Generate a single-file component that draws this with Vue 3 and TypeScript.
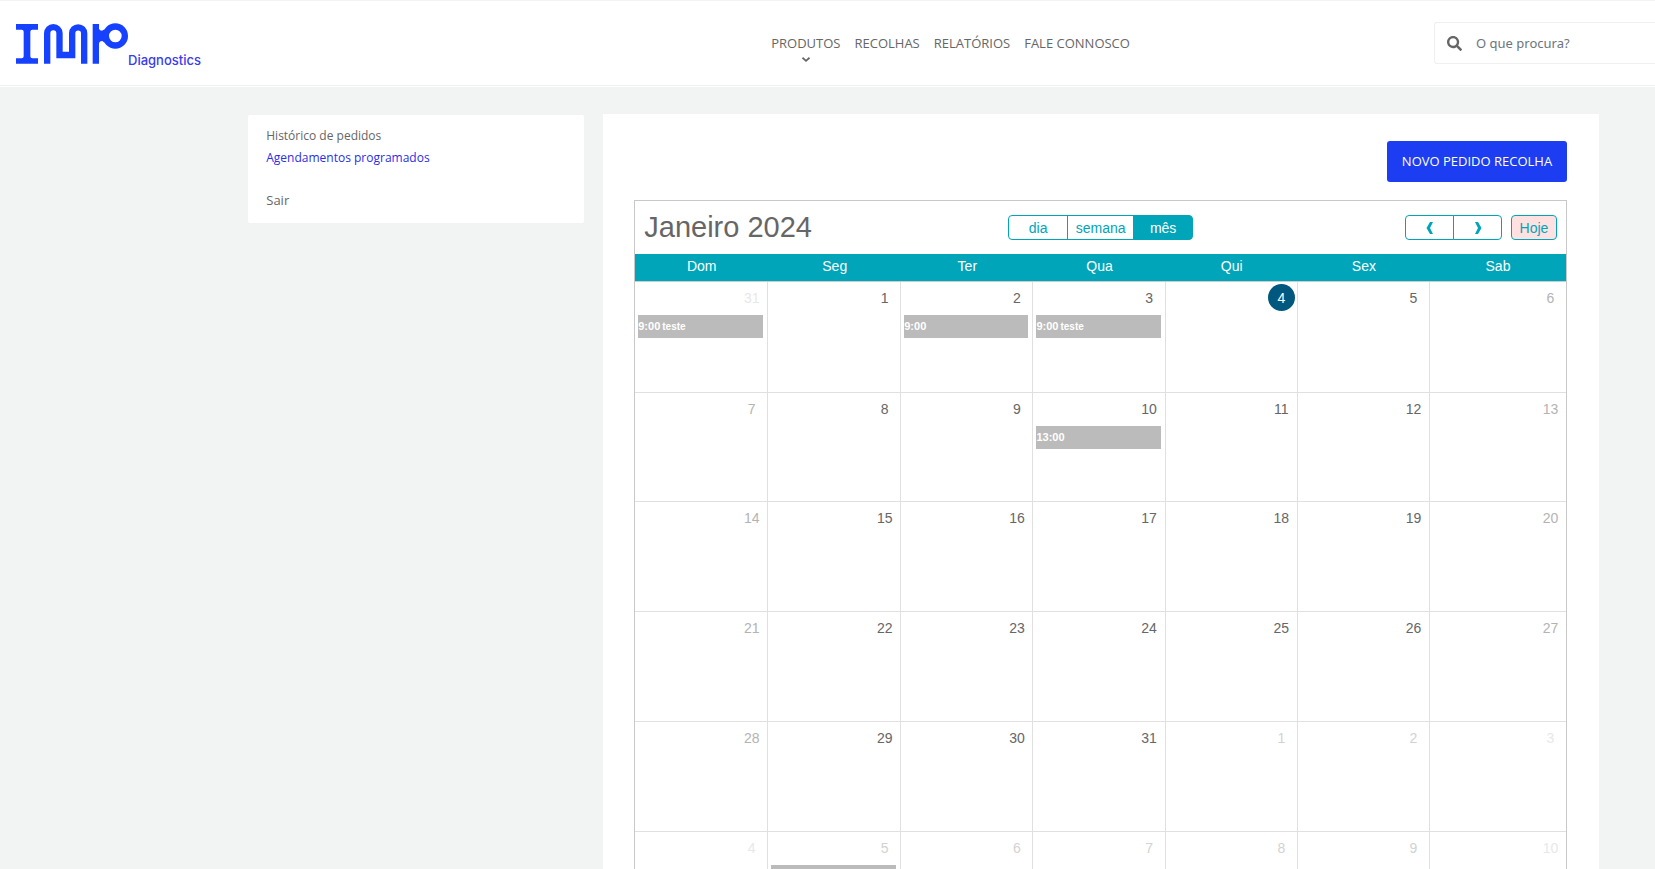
<script setup lang="ts">
interface CalendarEvent {
  time?: string
  title?: string
}

interface CalendarDay {
  key: string
  label: number
  tone: 'normal' | 'weekend' | 'outside' | 'outside-weekend'
  today: boolean
  events: CalendarEvent[]
}

const menu = [
  { label: 'PRODUTOS', expandable: true },
  { label: 'RECOLHAS', expandable: false },
  { label: 'RELATÓRIOS', expandable: false },
  { label: 'FALE CONNOSCO', expandable: false },
]

const weekdays = ['Dom', 'Seg', 'Ter', 'Qua', 'Qui', 'Sex', 'Sab']
const views = ['dia', 'semana', 'mês']
const activeView = 'mês'

const events: Record<string, CalendarEvent[]> = {
  '2023-12-31': [{ time: '9:00', title: 'teste' }],
  '2024-1-2': [{ time: '9:00' }],
  '2024-1-3': [{ time: '9:00', title: 'teste' }],
  '2024-1-10': [{ time: '13:00' }],
  '2024-2-5': [{}],
}

function buildDay(offset: number): CalendarDay {
  const date = new Date(2023, 11, 31 + offset)
  const key = `${date.getFullYear()}-${date.getMonth() + 1}-${date.getDate()}`
  const outside = date.getMonth() !== 0
  const weekend = date.getDay() === 0 || date.getDay() === 6
  const tone = outside ? (weekend ? 'outside-weekend' : 'outside') : weekend ? 'weekend' : 'normal'
  return { key, label: date.getDate(), tone, today: key === '2024-1-4', events: events[key] ?? [] }
}

const weeks: CalendarDay[][] = Array.from({ length: 6 }, (_, w) =>
  Array.from({ length: 7 }, (_, d) => buildDay(w * 7 + d)),
)
</script>

<template>
  <div class="page">
    <header class="topbar">
      <a class="logo" href="#" aria-label="IMP Diagnostics">
        <svg class="logo-mark" viewBox="48 70 336 123" aria-hidden="true">
          <path
            fill="#1641ff"
            d="M48 73H114V90H97Q91 90 91 96V170Q91 176 97 176H114V192H48V176H65Q71 176 71 170V96Q71 90 65 90H48Z"
          />
          <path
            fill="none"
            stroke="#1641ff"
            stroke-width="19"
            d="M141.500 192V101a18.500 18.500 0 0 1 37 0V166H216.500V101a18 18 0 0 1 36 0V192"
          />
          <path fill="#1641ff" d="M278 73H297V87Q299 93 306 93L314 89V129L307 124Q297 124 297 134V192H278Z" />
          <circle cx="346" cy="109" r="28.500" fill="none" stroke="#1641ff" stroke-width="19" />
        </svg>
        <span class="logo-text">Diagnostics</span>
      </a>
      <nav class="menu">
        <a v-for="item in menu" :key="item.label" class="menu-link" href="#">
          {{ item.label }}
          <svg v-if="item.expandable" class="caret" viewBox="0 0 8 5" aria-hidden="true">
            <path d="M0.500 0.700 4 3.800 7.500 0.700" fill="none" stroke="#666" stroke-width="1.800" />
          </svg>
        </a>
      </nav>
      <form class="search" role="search" @submit.prevent>
        <button class="search-button" type="submit" aria-label="Procurar">
          <svg viewBox="0 0 512 512" aria-hidden="true">
            <path
              fill="#666"
              d="M505 442.700 405.300 343c-4.500-4.500-10.600-7-17-7H372c27.600-35.300 44-79.700 44-128C416 93.100 322.900 0 208 0S0 93.100 0 208s93.100 208 208 208c48.300 0 92.700-16.400 128-44v16.300c0 6.400 2.500 12.500 7 17l99.700 99.700c9.400 9.400 24.600 9.400 33.900 0l28.300-28.300c9.400-9.400 9.400-24.600.1-34zM208 336c-70.700 0-128-57.200-128-128 0-70.700 57.200-128 128-128 70.700 0 128 57.200 128 128 0 70.700-57.200 128-128 128z"
            />
          </svg>
        </button>
        <input class="search-input" type="search" placeholder="O que procura?" aria-label="O que procura?" />
      </form>
    </header>

    <div class="content">
      <aside class="sidebar">
        <a class="side-link" href="#">Histórico de pedidos</a>
        <a class="side-link active" href="#" aria-current="page">Agendamentos programados</a>
        <a class="side-link logout" href="#">Sair</a>
      </aside>

      <main class="panel">
        <button class="primary" type="button">NOVO PEDIDO RECOLHA</button>

        <section class="calendar" aria-labelledby="calendar-title">
          <div class="toolbar">
            <h1 id="calendar-title" class="title">Janeiro 2024</h1>
            <div class="group">
              <button
                v-for="view in views"
                :key="view"
                type="button"
                class="tool"
                :class="{ selected: view === activeView, wide: view === 'semana' }"
                :aria-pressed="view === activeView"
              >
                {{ view }}
              </button>
            </div>
            <div class="paging">
              <div class="group">
                <button type="button" class="tool step" aria-label="Anterior">
                  <svg viewBox="0 0 8 12" aria-hidden="true"><path d="M4 0H7L4 6 7 12H4L0.500 6Z" fill="#00a5b9" /></svg>
                </button>
                <button type="button" class="tool step" aria-label="Seguinte">
                  <svg viewBox="0 0 8 12" aria-hidden="true"><path d="M4 0H1L4 6 1 12H4L7.500 6Z" fill="#00a5b9" /></svg>
                </button>
              </div>
              <button type="button" class="tool today-button">Hoje</button>
            </div>
          </div>

          <table class="grid" aria-labelledby="calendar-title">
            <colgroup>
              <col class="lead-col" span="2" />
              <col span="4" />
              <col class="last-col" />
            </colgroup>
            <thead>
              <tr>
                <th v-for="name in weekdays" :key="name" scope="col">{{ name }}</th>
              </tr>
            </thead>
            <tbody>
              <tr v-for="(week, index) in weeks" :key="index">
                <td v-for="day in week" :key="day.key">
                  <span class="number" :class="[day.tone, { today: day.today }]">{{ day.label }}</span>
                  <div v-for="(event, slot) in day.events" :key="slot" class="event">
                    <span v-if="event.time">{{ event.time }}</span>
                    <span v-if="event.title" class="event-title">{{ event.title }}</span>
                  </div>
                </td>
              </tr>
            </tbody>
          </table>
        </section>
      </main>
    </div>
  </div>
</template>

<style>
body {
  margin: 0;
  background: #f1f4f3;
}
html {
  scrollbar-width: none;
}
</style>

<style scoped>
.page {
  color: #666;
  font-family: 'Open Sans', 'Noto Sans', sans-serif;
  font-size: 12px;
}
.page *,
.page {
  box-sizing: border-box;
}
a {
  color: inherit;
  text-decoration: none;
}
button {
  font: inherit;
  cursor: pointer;
}
.topbar {
  display: grid;
  grid-template-columns: 46.6% 1fr 221px;
  align-items: start;
  height: 87px;
  background: #fff;
  border-top: 1px solid #f1f4f3;
  box-shadow: inset 0 -1px #fff, inset 0 -2px #f0f1f1;
}
.logo {
  display: flex;
  align-items: flex-end;
  padding: 22px 0 0 16px;
}
.logo-mark {
  width: 112px;
  height: 41px;
}
.logo-text {
  margin-bottom: -4px;
  color: #3a3af0;
  font: 500 13px/16px Inter, sans-serif;
}
.menu {
  display: flex;
  gap: 14px;
  padding-top: 32px;
  font-size: 13px;
  line-height: 20px;
}
.menu-link {
  display: flex;
  flex-direction: column;
  align-items: center;
  white-space: nowrap;
}
.caret {
  width: 8px;
  height: 5px;
  margin-top: 4px;
}
.search {
  display: flex;
  align-items: center;
  height: 42px;
  margin-top: 21px;
  border: 1px solid #eef0f0;
  border-right: 0;
  border-radius: 3px 0 0 3px;
}
.search-button {
  width: 41px;
  height: 40px;
  padding: 0 0 0 12px;
  background: none;
  border: 0;
}
.search-button svg {
  display: block;
  width: 15px;
  height: 15px;
}
.search-input {
  flex: 1;
  min-width: 0;
  padding: 0;
  color: #666;
  background: none;
  border: 0;
  font: 13px/20px 'Noto Sans', 'Open Sans', sans-serif;
}
.search-input::placeholder {
  color: #6c757d;
  opacity: 1;
}
.content {
  display: grid;
  grid-template-columns: 336px 1fr;
  gap: 19px;
  align-items: start;
  padding: 27px 56px 0 15%;
}
.sidebar {
  display: flex;
  flex-direction: column;
  align-items: flex-start;
  margin-top: 1px;
  padding: 10px 18px 12px;
  background: #fff;
  border-radius: 2px;
  line-height: 22px;
}
.active {
  color: #2d2de8;
}
.logout {
  margin-top: 20px;
  font-size: 13px;
}
.panel {
  display: flex;
  flex-direction: column;
  padding: 27px 32px 32px 31px;
  background: #fff;
}
.primary {
  align-self: flex-end;
  min-width: 180px;
  height: 41px;
  padding: 0 14px 2px;
  color: #fff;
  background: #1c3df2;
  border: 0;
  border-radius: 3px;
  font-size: 13px;
}
.calendar {
  margin-top: 18px;
  border: 1px solid #c8c8c8;
  font-family: 'Liberation Sans', Arial, sans-serif;
  font-size: 14px;
}
.toolbar {
  display: grid;
  grid-template-columns: 1fr auto 1fr;
  align-items: center;
  height: 53px;
  padding: 0 9px;
}
.title {
  margin: 0;
  font-size: 29px;
  font-weight: 400;
  line-height: 30px;
  padding-bottom: 2px;
}
.group {
  display: flex;
}
.tool {
  width: 60px;
  height: 25px;
  padding: 0;
  color: #00a5b9;
  background: #fff;
  border: 1px solid #00a5b9;
  line-height: 24px;
}
.tool.wide {
  width: 67px;
}
.group .tool + .tool {
  margin-left: -1px;
}
.group .tool:first-child {
  border-radius: 4px 0 0 4px;
}
.group .tool:last-child {
  border-radius: 0 4px 4px 0;
}
.tool.selected {
  color: #fff;
  background: #00a5b9;
}
.paging {
  display: flex;
  justify-content: flex-end;
  gap: 9px;
}
.tool.step {
  display: flex;
  align-items: center;
  justify-content: center;
  width: 49px;
}
.step svg {
  width: 8px;
  height: 12px;
}
.tool.today-button {
  width: 46px;
  background: #ffe1e1;
  border-radius: 4px;
}
.grid {
  width: 100%;
  table-layout: fixed;
  border-collapse: separate;
  border-spacing: 0;
}
.lead-col {
  width: 133px;
}
.last-col {
  width: 136px;
}
th {
  height: 28px;
  padding: 0 0 4px;
  color: #fff;
  background: #00a5b9;
  border-bottom: 1px solid #ccc;
  font-size: 14px;
  font-weight: 400;
}
td {
  height: 110px;
  padding: 2px 0 0;
  vertical-align: top;
  border-right: 1px solid #e0e0e0;
  border-bottom: 1px solid #e0e0e0;
}
tr:first-child td {
  height: 111px;
}
tr:nth-child(2) td {
  height: 109px;
}
td:last-child {
  border-right: 0;
}
.number {
  display: block;
  width: 27px;
  height: 27px;
  margin: 0 2px 4px auto;
  border-radius: 50%;
  line-height: 28px;
  text-align: center;
}
.weekend {
  color: #b3b3b3;
}
.outside {
  color: #d2d2d2;
}
.outside-weekend {
  color: #e8e8e8;
}
.today {
  color: #fff;
  background: #00587f;
}
.event {
  display: flex;
  gap: 2px;
  min-height: 23px;
  margin: 0 4px 0 3px;
  color: #fff;
  background: #bbb;
  font-size: 11px;
  font-weight: 700;
  line-height: 23px;
}
.event-title {
  font-size: 10px;
}
</style>
